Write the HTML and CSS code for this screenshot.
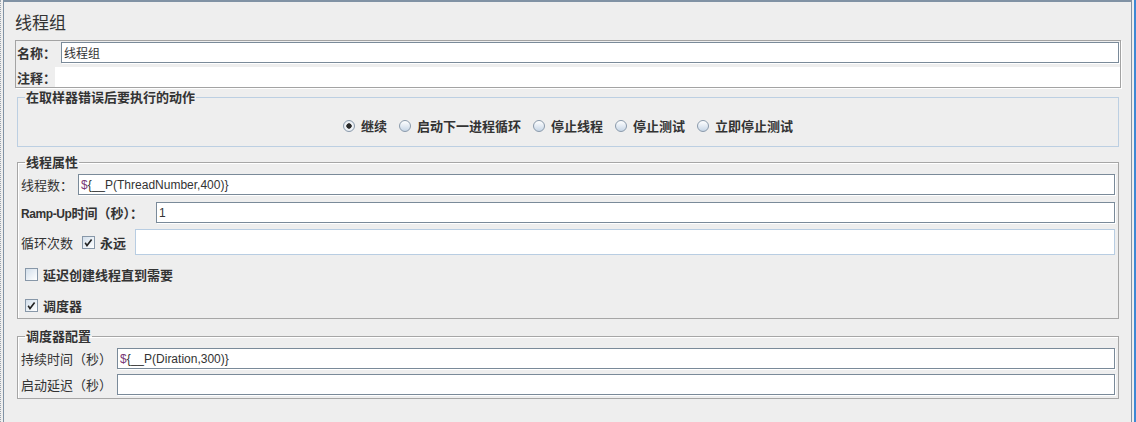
FILE: index.html
```html
<!DOCTYPE html>
<html lang="zh">
<head>
<meta charset="utf-8">
<title>线程组</title>
<link rel="stylesheet" href="styles.css">
</head>
<body>
<div class="window">
  <div class="gutter"></div>
  <div class="main">
    <h1 class="title">线程组</h1>

    <div class="namepanel">
      <div class="np-row name-row">
        <span class="np-label">名称：</span>
        <div class="field name-field">线程组</div>
      </div>
      <div class="np-row comment-row">
        <span class="np-label">注释：</span>
        <div class="area"></div>
      </div>
    </div>

    <fieldset class="group blue">
      <legend>在取样器错误后要执行的动作</legend>
      <div class="radios">
        <label class="opt"><span class="radio on"></span>继续</label>
        <label class="opt"><span class="radio"></span>启动下一进程循环</label>
        <label class="opt"><span class="radio"></span>停止线程</label>
        <label class="opt"><span class="radio"></span>停止测试</label>
        <label class="opt"><span class="radio"></span>立即停止测试</label>
      </div>
    </fieldset>

    <fieldset class="group gray props">
      <legend>线程属性</legend>
      <div class="row r-threads">
        <span class="lbl lbl-threads">线程数：</span>
        <div class="field"><span class="dollar">$</span>{__P(ThreadNumber,400)}</div>
      </div>
      <div class="row r-ramp">
        <span class="lbl lbl-ramp"><span class="latin">Ramp-Up</span>时间（秒）：</span>
        <div class="field">1</div>
      </div>
      <div class="row r-loop">
        <span class="lbl">循环次数</span>
        <span class="cb loop-cb"><svg viewBox="0 0 11 11" width="11" height="11"><path d="M2.2 5.8 L4 8.6 L8.6 2.6" fill="none" stroke="#222" stroke-width="1.6"/></svg></span>
        <span class="cb-text">永远</span>
        <div class="field disabled"></div>
      </div>
      <div class="row r-check r-delay">
        <span class="cb"></span>
        <span class="cb-text">延迟创建线程直到需要</span>
      </div>
      <div class="row r-check r-sched">
        <span class="cb"><svg viewBox="0 0 11 11" width="11" height="11"><path d="M2.2 5.8 L4 8.6 L8.6 2.6" fill="none" stroke="#222" stroke-width="1.6"/></svg></span>
        <span class="cb-text">调度器</span>
      </div>
    </fieldset>

    <fieldset class="group gray sched">
      <legend>调度器配置</legend>
      <div class="row r-dur">
        <span class="lbl lbl-sched">持续时间（秒）</span>
        <div class="field"><span class="dollar">$</span>{__P(Diration,300)}</div>
      </div>
      <div class="row r-delay2">
        <span class="lbl lbl-sched">启动延迟（秒）</span>
        <div class="field"></div>
      </div>
    </fieldset>
  </div>
  <div class="edge"></div>
</div>
</body>
</html>
```

FILE: styles.css
```css
* { box-sizing: border-box; }

body {
  margin: 0;
  background: #eeeeee;
  font-family: "Noto Sans CJK SC", "Liberation Sans", sans-serif;
  font-size: 13px;
  color: #333333;
}

.window {
  display: flex;
  width: 1136px;
  height: 422px;
}

.gutter {
  width: 3px;
  border-left: 1px dotted #9aa3ad;
}

.main {
  flex: 1;
  border-top: 2px solid #8092a4;
  border-left: 1px solid #8092a4;
  border-right: 1px solid #8092a4;
  padding: 10px 10px 0 11px;
}

.edge {
  width: 4px;
  border-right: 2px solid #3b88d4;
}

.title {
  margin: 0 0 8px;
  height: 20px;
  font-size: 17px;
  line-height: 20px;
  font-weight: normal;
  color: #333;
}

/* name / comment panel */
.namepanel {
  height: 48px;
  border: 1px solid #a3a3a3;
  box-shadow: 1px 1px 0 #ffffff;
  display: flex;
  flex-direction: column;
  gap: 4px;
}

.np-row {
  display: flex;
  align-items: center;
}

.name-row { height: 22px; padding-right: 1px; }
.comment-row { height: 20px; }

.np-label {
  width: 39px;
  padding-left: 1px;
  font-weight: bold;
  white-space: nowrap;
}

.name-field { margin-left: 6px; height: 22px; font-size: 13px; }

.area {
  flex: 1;
  height: 20px;
  background: #ffffff;
}

/* text fields */
.field {
  flex: 1;
  height: 21px;
  background: #ffffff;
  border: 1px solid #7a8a99;
  box-shadow: 1px 1px 0 #ffffff;
  padding-left: 2px;
  display: flex;
  align-items: center;
  font-family: "Liberation Sans", "Noto Sans CJK SC", sans-serif;
  font-size: 12px;
  color: #333;
  white-space: nowrap;
}

.name-field { font-family: "Noto Sans CJK SC", sans-serif; }

.dollar { color: #7a3a78; }

.field.disabled {
  height: 26px;
  border-color: #b8cde2;
  box-shadow: none;
}

/* groups */
.group {
  margin: 0 2px;
  padding: 0 3px;
  min-width: 0;
}

.group legend {
  margin-left: 4px;
  padding: 0 1px;
  line-height: 16px;
  font-weight: bold;
}

.blue {
  margin-top: 1px;
  border: 1px solid #bccfe2;
}

.gray {
  border: 1px solid #a6a6a6;
  box-shadow: inset 1px 1px 0 #ffffff;
}

.props { margin-top: 7px; padding: 4px 3px 3px 3px; }
.sched { margin-top: 9px; padding: 4px 3px 3px 3px; }

.radios {
  display: flex;
  justify-content: center;
  gap: 12px;
  padding: 13px 0 12px;
  line-height: 16px;
  font-weight: bold;
}

.opt {
  display: flex;
  align-items: center;
  gap: 6px;
}

.radio {
  width: 12px;
  height: 12px;
  border-radius: 50%;
  border: 1px solid #8a9aab;
  background: linear-gradient(#ffffff, #c7d6e6);
}

.radio.on {
  background: radial-gradient(circle, #2a2a2a 0 2.4px, #f3f5f8 3px, #dbe4ee 100%);
}

/* rows */
.row {
  display: flex;
  align-items: center;
}

.lbl { white-space: nowrap; }
.lbl-threads { width: 57px; }
.lbl-ramp { width: 135px; font-weight: bold; }
.lbl-ramp .latin { font-family: "Liberation Sans", sans-serif; font-size: 12px; letter-spacing: -0.4px; }
.lbl-sched { width: 96px; }

.r-ramp { margin-top: 7px; }
.r-loop { margin-top: 6px; height: 26px; }
.r-loop .lbl { width: 61px; }
.r-loop .cb-text { margin-right: 9px; }

.r-check { height: 20px; padding-left: 4px; }
.r-delay { margin-top: 9px; }
.r-sched { margin-top: 11px; }
.r-delay2 { margin-top: 5px; }

.cb {
  width: 13px;
  height: 13px;
  border: 1px solid #8797a8;
  background: linear-gradient(to bottom right, #d3dfeb, #ffffff);
  display: inline-flex;
  flex: none;
}

.cb-text {
  margin-left: 5px;
  font-weight: bold;
  white-space: nowrap;
}
```
